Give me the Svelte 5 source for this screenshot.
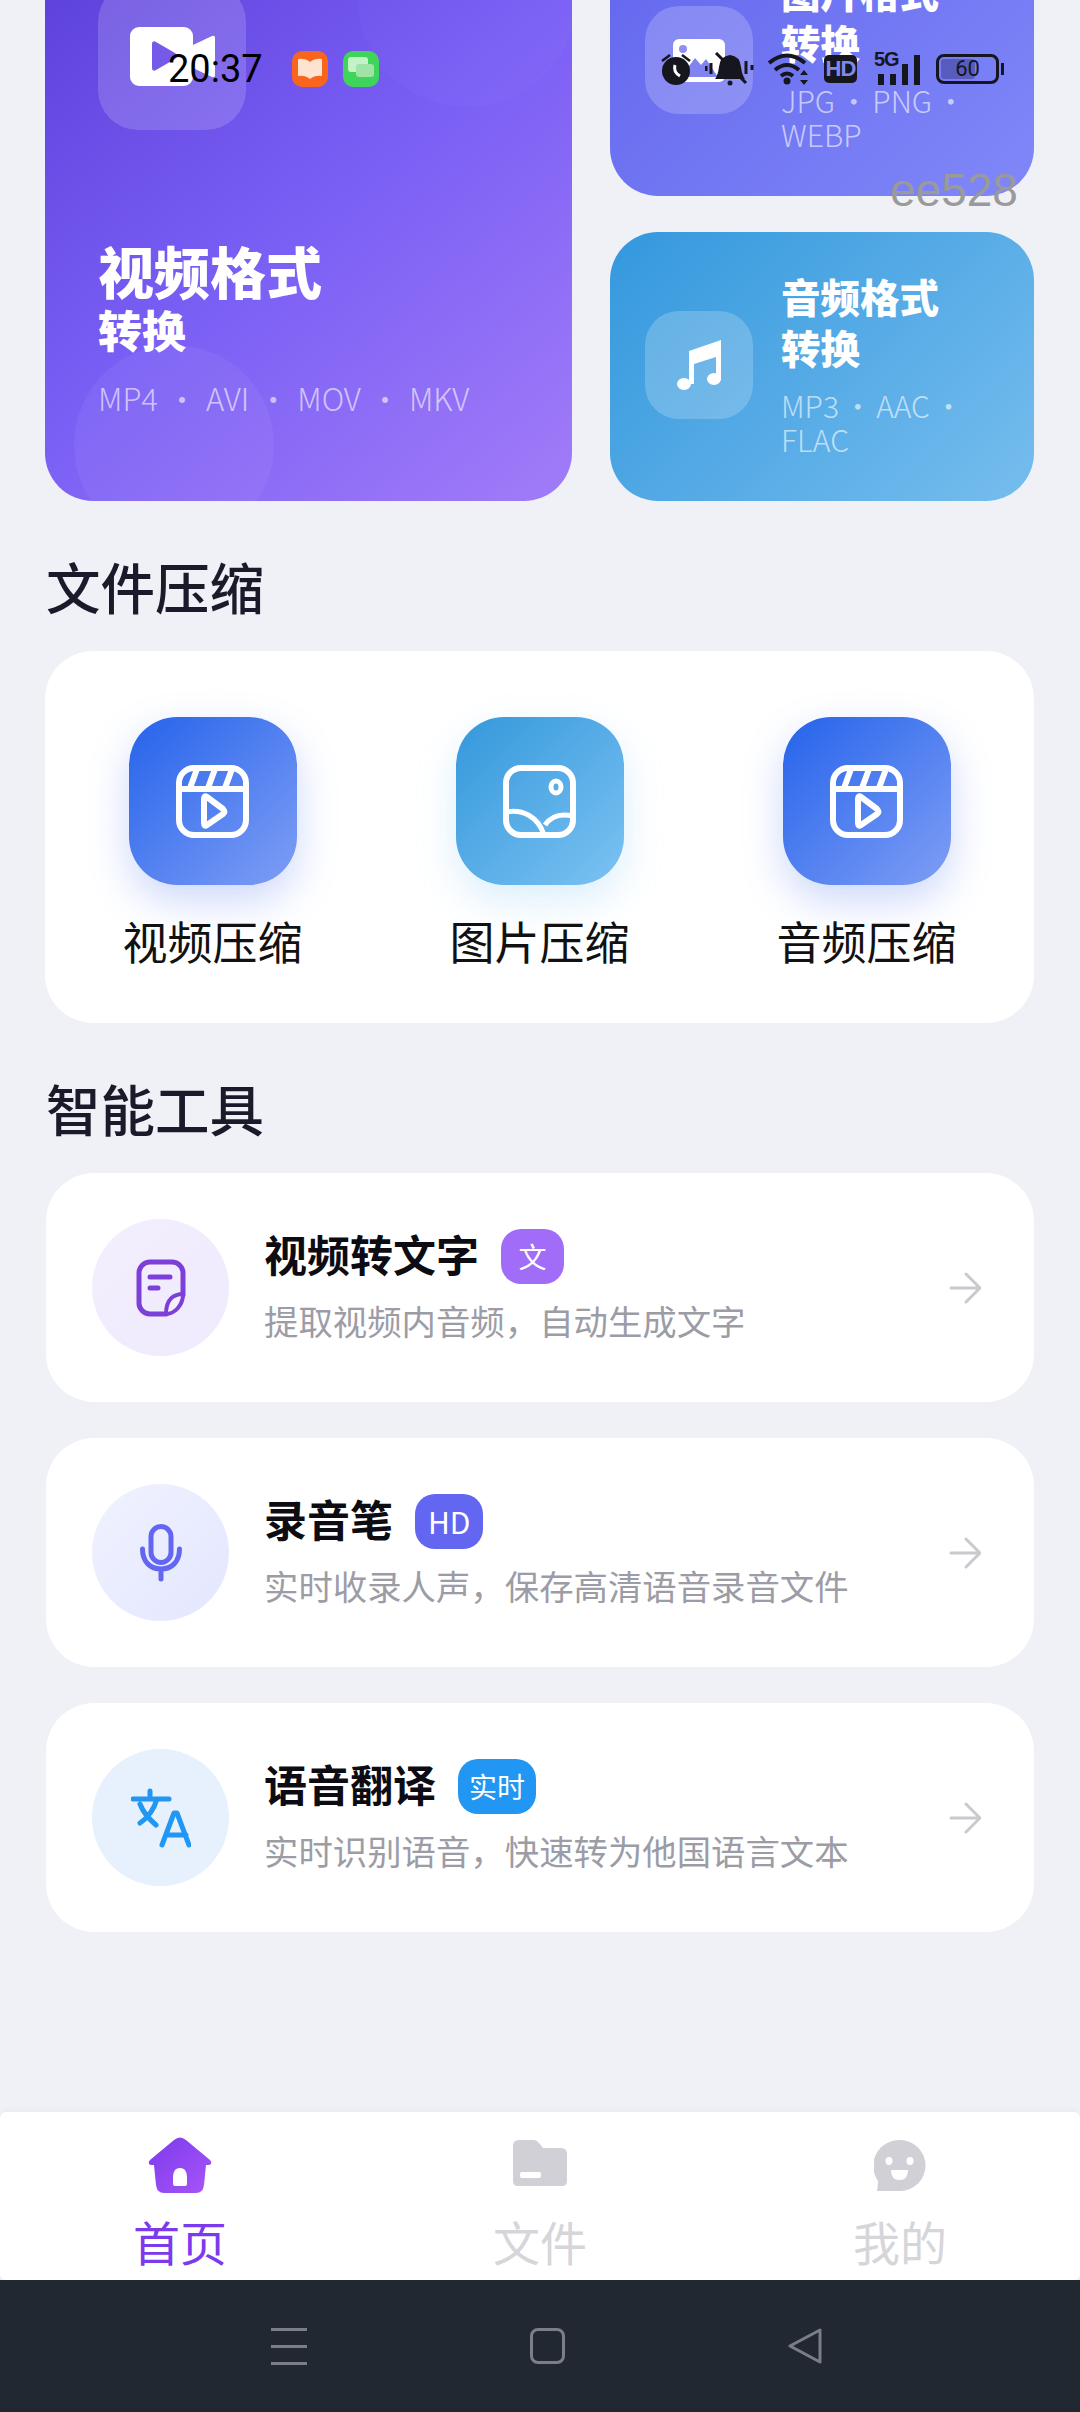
<script>
    const compress = [
        { label: '视频压缩', tone: 'blue', icon: 'reel' },
        { label: '图片压缩', tone: 'sky', icon: 'photo' },
        { label: '音频压缩', tone: 'blue', icon: 'reel' }
    ];

    const tools = [
        { title: '视频转文字', badge: '文', badgeTone: 'violet', desc: '提取视频内音频，自动生成文字', icon: 'note' },
        { title: '录音笔', badge: 'HD', badgeTone: 'indigo', desc: '实时收录人声，保存高清语音录音文件', icon: 'mic' },
        { title: '语音翻译', badge: '实时', badgeTone: 'azure', desc: '实时识别语音，快速转为他国语言文本', icon: 'translate' }
    ];
</script>

<div class="screen">
    <main>
        <section class="formats">
            <div class="card big">
                <span class="blob blob-top"></span>
                <span class="blob blob-bottom"></span>
                <div class="tile tile-big">
                    <svg width="85" height="59" viewBox="0 0 85 59">
                        <path d="M9 0h45a9 9 0 0 1 9 9v9l19-9q3-1 3 2v37q0 3-3 2L63 41v9a9 9 0 0 1-9 9H9a9 9 0 0 1-9-9V9a9 9 0 0 1 9-9z" fill="#fff"/>
                        <path d="M22 17q0-4 4-2l19 11q4 3 0 6L26 43q-4 2-4-2z" fill="#7559e8"/>
                    </svg>
                </div>
                <div class="big-text">
                    <h2>视频格式</h2>
                    <h3>转换</h3>
                    <p>MP4 &nbsp;·&nbsp; AVI &nbsp;·&nbsp; MOV &nbsp;·&nbsp; MKV</p>
                </div>
            </div>

            <div class="card small image">
                <div class="tile">
                    <svg width="52" height="43" viewBox="0 0 52 43">
                        <rect width="52" height="43" rx="6" fill="#fff"/>
                        <circle cx="10" cy="10" r="4" fill="#8f8ff5"/>
                        <path d="M8 38l14-19 6 7 5-6 12 18z" fill="#8183f0"/>
                    </svg>
                </div>
                <div class="small-text">
                    <h3>图片格式<br>转换</h3>
                    <p>JPG · PNG · WEBP</p>
                </div>
            </div>

            <div class="card small audio">
                <div class="tile">
                    <svg width="44" height="50" viewBox="0 0 44 50">
                        <path d="M12 11L44 0v40h-5V17L17 24v20h-5z" fill="#fff"/>
                        <ellipse cx="7" cy="44" rx="7" ry="6" fill="#fff"/>
                        <ellipse cx="37" cy="39" rx="7" ry="6" fill="#fff"/>
                    </svg>
                </div>
                <div class="small-text">
                    <h3>音频格式<br>转换</h3>
                    <p>MP3 · AAC · FLAC</p>
                </div>
            </div>
        </section>

        <h1>文件压缩</h1>
        <section class="compress">
            {#each compress as item}
                <div class="compress-item">
                    <div class="compress-icon {item.tone}">
                        {#if item.icon === 'reel'}
                            <svg width="73" height="73" viewBox="0 0 73 73" fill="none" stroke="#fff" stroke-width="6" stroke-linejoin="round">
                                <rect x="3" y="3" width="67" height="67" rx="15"/>
                                <path d="M3 24h67M21 4l-7 19M39 4l-7 19M56 4l-7 19"/>
                                <path d="M28 34q0-4 3-2l16 12q3 3 0 5L31 60q-3 2-3-2z" stroke-width="6"/>
                            </svg>
                        {:else}
                            <svg width="73" height="73" viewBox="0 0 73 73" fill="none" stroke="#fff" stroke-width="6" stroke-linejoin="round">
                                <rect x="3" y="3" width="67" height="67" rx="15"/>
                                <ellipse cx="53" cy="22" rx="5" ry="6" stroke-width="5"/>
                                <path d="M3 47c16-3 32 4 38 23M42 60c6-9 15-12 28-9" stroke-width="5"/>
                            </svg>
                        {/if}
                    </div>
                    <span>{item.label}</span>
                </div>
            {/each}
        </section>

        <h1>智能工具</h1>
        <section class="tools">
            {#each tools as tool}
                <div class="tool">
                    <div class="tool-icon {tool.icon}">
                        {#if tool.icon === 'note'}
                            <svg width="50" height="58" viewBox="0 0 50 58" fill="none" stroke="#7c3fd8" stroke-width="5" stroke-linecap="round" stroke-linejoin="round">
                                <path d="M14 3h22a11 11 0 0 1 11 11v22L30 55H14A11 11 0 0 1 3 44V14A11 11 0 0 1 14 3z"/>
                                <path d="M14 18h20M14 29h8"/>
                                <path d="M47 35c-8 0-17 4-17 20 8 0 17-8 17-20z" fill="#f3effd" stroke-width="4"/>
                            </svg>
                        {:else if tool.icon === 'mic'}
                            <svg width="42" height="58" viewBox="0 0 42 58" fill="none" stroke="#6366f1" stroke-width="5" stroke-linecap="round">
                                <rect x="11" y="2.5" width="20" height="36" rx="10"/>
                                <path d="M2.5 25c0 13 8 20 18.500 20s18.500-7 18.500-20M21 45v10"/>
                            </svg>
                        {:else}
                            <svg width="60" height="60" viewBox="0 0 60 60" fill="none" stroke="#2196f3" stroke-width="5" stroke-linecap="round" stroke-linejoin="round">
                                <path d="M2 11h36M19 3v7M9 35c9-6 14-14 17-24M9 16c3 8 9 15 16 21"/>
                                <path d="M31 57l12-32 3 0 12 32M35 47h20"/>
                            </svg>
                        {/if}
                    </div>
                    <div class="tool-text">
                        <div class="tool-title">
                            <strong>{tool.title}</strong>
                            <em class={tool.badgeTone}>{tool.badge}</em>
                        </div>
                        <p>{tool.desc}</p>
                    </div>
                    <svg class="arrow" width="32" height="32" viewBox="0 0 32 32" fill="none" stroke="#cacace" stroke-width="3" stroke-linecap="round" stroke-linejoin="round">
                        <path d="M2 16h28M17 2l14 14-14 14"/>
                    </svg>
                </div>
            {/each}
        </section>
    </main>

    <nav class="tabs">
        <div class="tab active">
            <svg width="64" height="56" viewBox="0 0 64 56">
                <defs>
                    <linearGradient id="homeFill" x1="0" y1="0" x2="1" y2="1">
                        <stop offset="0" stop-color="#7c3aed"/>
                        <stop offset="1" stop-color="#a855f7"/>
                    </linearGradient>
                </defs>
                <path d="M26 3q6-5 12 0l24 20q3 4-1 5l-3 0-2 20q-1 8-8 8H16q-7 0-8-8L6 28H3q-4-1-1-5z" fill="url(#homeFill)"/>
                <path d="M32 31c5 0 7 4 7 10v6q0 2-2 2H27q-2 0-2-2v-6c0-6 2-10 7-10z" fill="#fff"/>
            </svg>
            <span>首页</span>
        </div>
        <div class="tab">
            <svg width="54" height="46" viewBox="0 0 54 46">
                <path d="M6 0h15q3 0 5 3l4 5h18q6 0 6 6v27q0 5-5 5H5q-5 0-5-5V6q0-6 6-6z" fill="#d1d0d6"/>
                <rect x="7" y="32" width="21" height="6" rx="2" fill="#fff"/>
            </svg>
            <span>文件</span>
        </div>
        <div class="tab">
            <svg width="52" height="52" viewBox="0 0 52 52">
                <path d="M26 0a25.500 25.500 0 0 1 0 51H3q1-5 1-10A26 26 0 0 1 26 0z" fill="#d1d0d6"/>
                <ellipse cx="15" cy="21" rx="3.500" ry="4" fill="#fff"/>
                <ellipse cx="36" cy="21" rx="3.500" ry="4" fill="#fff"/>
                <path d="M17 30h17q0 10-8.500 10T17 30z" fill="#fff"/>
            </svg>
            <span>我的</span>
        </div>
    </nav>

    <div class="system-nav">
        <div class="menu-lines"><i></i><i></i><i></i></div>
        <div class="home-box"></div>
        <svg width="34" height="36" viewBox="0 0 34 36" fill="none" stroke="#7a7f86" stroke-width="3" stroke-linejoin="round">
            <path d="M32 2v32L2 18z"/>
        </svg>
    </div>

    <!-- status bar sits on top of the scrolled page -->
    <div class="status">
        <div class="status-left">
            <span class="clock">20:37</span>
            <span class="app orange">
                <svg width="26" height="22" viewBox="0 0 26 22"><path d="M13 4Q8 0 1 1v17q7-1 12 3 5-4 12-3V1q-7-1-12 3z" fill="#ffe3d2"/></svg>
            </span>
            <span class="app green">
                <svg width="26" height="24" viewBox="0 0 26 24"><rect x="0" y="0" width="20" height="15" rx="3" fill="#c4f3c8"/><rect x="8" y="7" width="18" height="13" rx="3" fill="#9fe3a6"/></svg>
            </span>
        </div>
        <div class="status-right">
            <svg width="30" height="34" viewBox="0 0 30 34">
                <circle cx="15" cy="19" r="14" fill="#16161e"/>
                <path d="M1 9l8-6M29 9l-8-6" stroke="#16161e" stroke-width="2.500"/>
                <path d="M14 13q-2 7 5 11" stroke="#fff" stroke-width="3" fill="none"/>
            </svg>
            <svg class="bell" width="49" height="34" viewBox="0 0 49 34">
                <path d="M1 14v5M6 11v11M41 9v13M47 13v5" stroke="#16161e" stroke-width="3"/>
                <path d="M10 27q3-4 4-12 1-11 11-12 10 1 11 12 1 8 4 12z" fill="#16161e"/>
                <circle cx="25" cy="31" r="2.500" fill="#16161e"/>
                <path d="M11 1l30 30" stroke="#16161e" stroke-width="3"/>
            </svg>
            <svg width="42" height="34" viewBox="0 0 42 34" fill="none" stroke="#16161e" stroke-width="4">
                <path d="M1 11q18-15 36 0M7 18q12-10 24 0M13 24q6-5 12 0"/>
                <circle cx="19" cy="29" r="3.500" fill="#16161e" stroke="none"/>
                <path d="M36 18l-4 5h8zM36 33l-4-5h8z" fill="#16161e" stroke="none"/>
            </svg>
            <span class="hd">HD</span>
            <div class="signal">
                <span class="five-g">5G</span>
                <div class="bars"><i></i><i></i><i></i><i></i></div>
            </div>
            <div class="battery">
                <div class="battery-body"><span class="level"></span><span class="pct">60</span></div>
                <span class="cap"></span>
            </div>
        </div>
    </div>

    <div class="watermark">ee528</div>
</div>

<style>
    :global(body) {
        margin: 0;
        background: #eff1f6;
    }
    .screen {
        position: relative;
        width: 1080px;
        height: 2412px;
        overflow: hidden;
        display: flex;
        flex-direction: column;
        background: #eff1f6;
        font-family: "Noto Sans CJK SC", "Noto Sans", sans-serif;
    }
    main {
        flex: 1;
        min-height: 0;
        margin-top: -73px;
        padding: 0 46px 0 45px;
    }
    h1, h2, h3, p {
        margin: 0;
    }
    h1 {
        font-size: 54.5px;
        line-height: 70px;
        font-weight: 500;
        color: #1a1a2a;
        padding-left: 1px;
        margin: 50px 0 30px;
    }

    .formats {
        display: grid;
        grid-template-columns: 527px 424px;
        grid-template-rows: 269px 269px;
        column-gap: 38px;
        row-gap: 36px;
    }
    .card {
        position: relative;
        overflow: hidden;
        border-radius: 48px;
        color: #fff;
    }
    .big {
        grid-row: 1 / 3;
        padding: 55px 53px 0;
        box-sizing: border-box;
        background: linear-gradient(140deg, #5a3dd8 0%, #7a5ff5 50%, #a27cf8 100%);
    }
    .blob {
        position: absolute;
        border-radius: 50%;
    }
    .blob-top {
        width: 220px;
        height: 220px;
        top: -40px;
        right: -5px;
        background: rgba(255, 255, 255, 0.02);
    }
    .blob-bottom {
        width: 200px;
        height: 200px;
        left: 29px;
        bottom: -44px;
        background: rgba(255, 255, 255, 0.05);
    }
    .tile {
        width: 108px;
        height: 108px;
        flex-shrink: 0;
        margin-top: -3px;
        border-radius: 34px;
        background: rgba(255, 255, 255, 0.2);
        display: flex;
        align-items: center;
        justify-content: center;
    }
    .tile-big {
        position: relative;
        width: 148px;
        height: 148px;
        margin-top: 0;
        border-radius: 40px;
        background: rgba(255, 255, 255, 0.16);
    }
    .big-text {
        position: relative;
        margin-top: 107px;
    }
    .big-text h2 {
        font-size: 56px;
        line-height: 65px;
        font-weight: 900;
    }
    .big-text h3 {
        font-size: 44px;
        line-height: 54px;
        font-weight: 900;
    }
    .big-text p {
        font-size: 31px;
        line-height: 44px;
        margin-top: 20px;
        font-weight: 300;
        word-spacing: -2.600px;
        color: rgba(255, 255, 255, 0.62);
        white-space: nowrap;
    }
    .small {
        display: flex;
        align-items: center;
        gap: 28px;
        padding: 0 20px 0 35px;
    }
    .image {
        background: linear-gradient(135deg, #6366ee, #8088f8);
    }
    .audio {
        background: linear-gradient(135deg, #3498dd, #76bdee);
    }
    .small-text {
        padding-bottom: 7px;
    }
    .small-text h3 {
        font-size: 39.500px;
        line-height: 51px;
        font-weight: 900;
    }
    .small-text p {
        font-size: 30px;
        line-height: 34px;
        margin-top: 16px;
        font-weight: 300;
        word-spacing: -3px;
        color: rgba(255, 255, 255, 0.62);
    }

    .compress {
        display: grid;
        grid-template-columns: repeat(3, 1fr);
        padding: 66px 4px 52px;
        background: #fff;
        border-radius: 48px;
    }
    .compress-item {
        display: flex;
        flex-direction: column;
        align-items: center;
        gap: 26px;
    }
    .compress-item span {
        font-size: 45px;
        line-height: 60px;
        color: #111;
    }
    .compress-icon {
        width: 168px;
        height: 168px;
        border-radius: 48px;
        display: flex;
        align-items: center;
        justify-content: center;
    }
    .compress-icon.blue {
        background: linear-gradient(135deg, #2563eb, #7f9ef5);
        box-shadow: 0 16px 40px rgba(80, 120, 240, 0.28);
    }
    .compress-icon.sky {
        background: linear-gradient(135deg, #3498db, #7cc2f3);
        box-shadow: 0 16px 40px rgba(90, 180, 240, 0.22);
    }

    .tools {
        display: flex;
        flex-direction: column;
        gap: 36px;
        margin-left: 1px;
    }
    .tool {
        height: 229px;
        display: flex;
        align-items: center;
        padding: 0 53px 0 46px;
        background: #fff;
        border-radius: 48px;
    }
    .tool-icon {
        width: 137px;
        height: 137px;
        flex-shrink: 0;
        border-radius: 50%;
        display: flex;
        align-items: center;
        justify-content: center;
    }
    .tool-icon.note {
        background: linear-gradient(135deg, #f3effd, #efeafd);
    }
    .tool-icon.mic {
        background: linear-gradient(135deg, #f0f2fe, #e3e7fe);
    }
    .tool-icon.translate {
        background: #e6f1fd;
    }
    .tool-text {
        flex: 1;
        margin-left: 35px;
        margin-top: -4px;
    }
    .tool-title {
        display: flex;
        align-items: center;
        gap: 22px;
        height: 56px;
    }
    .tool-title strong {
        font-size: 43px;
        line-height: 56px;
        font-weight: 700;
        color: #0c0c12;
        margin-bottom: 6px;
    }
    .tool-title em {
        font-style: normal;
        min-width: 63px;
        height: 55px;
        box-sizing: border-box;
        padding: 0 11px;
        border-radius: 20px;
        font-size: 28px;
        line-height: 55px;
        text-align: center;
        color: #fff;
    }
    .violet { background: #a06cf8; }
    .tool-title em.indigo {
        background: #6366f1;
        font-size: 30px;
        padding: 0 13px;
    }
    .azure { background: #2196f3; }
    .tool-text p {
        font-size: 34.400px;
        line-height: 46px;
        margin-top: 13px;
        color: #9c9ca6;
    }

    .tabs {
        height: 168px;
        display: grid;
        grid-template-columns: 360px 360px 360px;
        background: #fff;
        border-radius: 6px;
        box-shadow: 0 -2px 6px rgba(0, 0, 0, 0.03);
    }
    .tab {
        display: flex;
        flex-direction: column;
        align-items: center;
        justify-content: flex-end;
        height: 160px;
    }
    .tab svg {
        margin-bottom: auto;
        margin-top: 28px;
    }
    .tab span {
        font-size: 47px;
        line-height: 62px;
        color: #d6d6da;
    }
    .tab.active span {
        color: #7c3aed;
    }
    .tab.active svg {
        margin-top: 25px;
    }

    .system-nav {
        height: 132px;
        background: #222831;
        display: grid;
        grid-template-columns: 289px 258px 1fr;
        align-items: center;
    }
    .menu-lines {
        display: flex;
        flex-direction: column;
        gap: 14px;
        width: 36px;
        margin-left: 271px;
    }
    .menu-lines i {
        display: block;
        height: 3px;
        background: #7a7f86;
    }
    .home-box {
        width: 35px;
        height: 36px;
        box-sizing: border-box;
        border: 3px solid #7a7f86;
        border-radius: 8px;
        margin-left: 241px;
    }
    .system-nav svg {
        margin-left: 241px;
    }

    .status {
        position: absolute;
        left: 0;
        right: 0;
        top: 50px;
        height: 38px;
        display: flex;
        justify-content: space-between;
        padding: 0 76px 0 168px;
    }
    .status-left {
        display: flex;
        align-items: center;
    }
    .clock {
        font-family: Roboto, sans-serif;
        font-size: 38px;
        color: #000;
        width: 124px;
    }
    .app {
        width: 36px;
        height: 36px;
        border-radius: 10px;
        display: flex;
        align-items: center;
        justify-content: center;
        margin-right: 15px;
    }
    .orange { background: #f9651c; }
    .green { background: #3fd45a; }
    .status-right {
        display: flex;
        align-items: center;
        gap: 14px;
    }
    .hd {
        width: 33px;
        height: 28px;
        border-radius: 5px;
        background: #16161e;
        color: #8088f0;
        font-family: "Liberation Sans", sans-serif;
        font-size: 22px;
        font-weight: 700;
        line-height: 28px;
        text-align: center;
        letter-spacing: -1px;
    }
    .signal {
        position: relative;
        width: 46px;
        height: 32px;
        margin-left: 3px;
    }
    .five-g {
        position: absolute;
        left: 0;
        top: -3px;
        font-family: "Liberation Sans", sans-serif;
        font-size: 20px;
        line-height: 18px;
        font-weight: 700;
        letter-spacing: -1px;
        color: #16161e;
    }
    .bars {
        position: absolute;
        inset: 0;
        display: flex;
        align-items: flex-end;
        justify-content: flex-end;
        gap: 6px;
    }
    .bars i {
        display: block;
        width: 6px;
        background: #16161e;
    }
    .bars i:nth-child(1) { height: 11px; }
    .bars i:nth-child(2) { height: 11px; }
    .bars i:nth-child(3) { height: 21px; }
    .bars i:nth-child(4) { height: 30px; }
    .battery {
        display: flex;
        align-items: center;
        margin-left: 2px;
    }
    .battery-body {
        position: relative;
        width: 63px;
        height: 30px;
        box-sizing: border-box;
        border: 3px solid #16161e;
        border-radius: 8px;
        overflow: hidden;
    }
    .level {
        position: absolute;
        left: 2px;
        top: 2px;
        bottom: 2px;
        width: 34px;
        border-radius: 3px;
        background: rgba(30, 30, 90, 0.35);
    }
    .pct {
        position: absolute;
        inset: 0;
        font-family: Roboto, sans-serif;
        font-size: 22px;
        line-height: 24px;
        text-align: center;
        color: #16161e;
    }
    .cap {
        width: 3px;
        height: 12px;
        margin-left: 2px;
        background: #16161e;
    }
    .watermark {
        position: absolute;
        left: 890px;
        top: 164px;
        font-family: "Liberation Sans", sans-serif;
        font-size: 46px;
        line-height: 52px;
        color: #9a9a9a;
    }
</style>
